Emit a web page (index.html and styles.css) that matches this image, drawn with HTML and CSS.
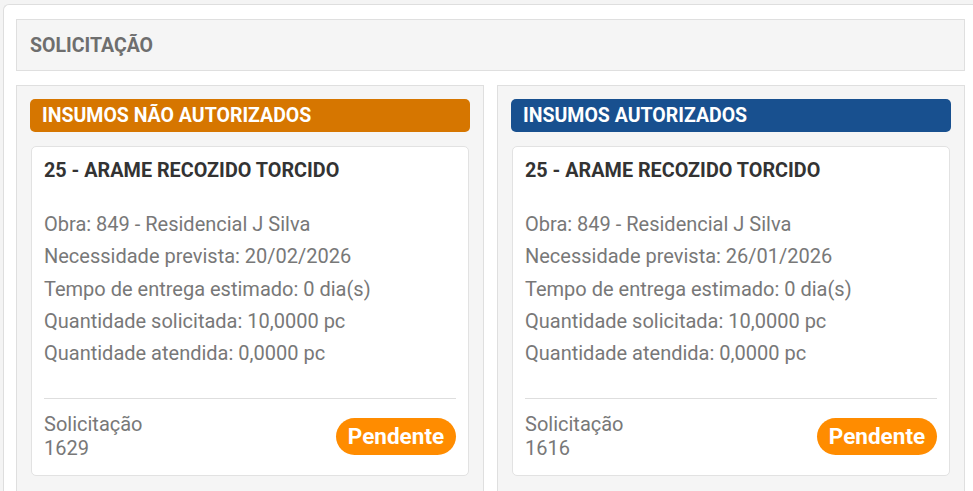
FILE: index.html
```html
<!DOCTYPE html>
<html lang="pt-BR">
<head>
<meta charset="utf-8">
<title>Solicitação</title>
<link rel="stylesheet" href="styles.css">
</head>
<body>
<div class="outer">
  <div class="page-header">SOLICITAÇÃO</div>
  <div class="columns">
    <section class="panel">
      <div class="bar bar-orange">INSUMOS NÃO AUTORIZADOS</div>
      <div class="card">
        <div class="card-title">25 - ARAME RECOZIDO TORCIDO</div>
        <div class="card-body">
          <div class="line">Obra: 849 - Residencial J Silva</div>
          <div class="line">Necessidade prevista: 20/02/2026</div>
          <div class="line">Tempo de entrega estimado: 0 dia(s)</div>
          <div class="line">Quantidade solicitada: 10,0000 pc</div>
          <div class="line">Quantidade atendida: 0,0000 pc</div>
        </div>
        <div class="card-footer">
          <div class="req">
            <div>Solicitação</div>
            <div>1629</div>
          </div>
          <span class="pill">Pendente</span>
        </div>
      </div>
    </section>
    <section class="panel">
      <div class="bar bar-blue">INSUMOS AUTORIZADOS</div>
      <div class="card">
        <div class="card-title">25 - ARAME RECOZIDO TORCIDO</div>
        <div class="card-body">
          <div class="line">Obra: 849 - Residencial J Silva</div>
          <div class="line">Necessidade prevista: 26/01/2026</div>
          <div class="line">Tempo de entrega estimado: 0 dia(s)</div>
          <div class="line">Quantidade solicitada: 10,0000 pc</div>
          <div class="line">Quantidade atendida: 0,0000 pc</div>
        </div>
        <div class="card-footer">
          <div class="req">
            <div>Solicitação</div>
            <div>1616</div>
          </div>
          <span class="pill">Pendente</span>
        </div>
      </div>
    </section>
  </div>
</div>
</body>
</html>
```

FILE: styles.css
```css
* { box-sizing: border-box; }

html, body {
  margin: 0;
  padding: 0;
  height: 100%;
  overflow: hidden;
}

body {
  background: #f4f4f4;
  font-family: Roboto, "Liberation Sans", Arial, sans-serif;
  padding: 4px 0 0 3px;
}

.outer {
  background: #ffffff;
  border: 1px solid #dedede;
  border-right: none;
  border-radius: 6px 0 0 0;
  padding: 14px 8px 0 12px;
  height: 600px;
}

.page-header {
  height: 52px;
  background: #f5f5f5;
  border: 1px solid #dfdfdf;
  padding-left: 13px;
  display: flex;
  align-items: center;
  font-size: 19.5px;
  font-weight: 700;
  color: #6e6e6e;
}

.columns {
  margin-top: 14px;
  display: grid;
  grid-template-columns: 1fr 1fr;
  gap: 13px;
}

.panel {
  background: #f5f5f5;
  border: 1px solid #dfdfdf;
  padding: 13px 13px 40px;
}

.bar {
  height: 33px;
  border-radius: 5px;
  padding-left: 12px;
  display: flex;
  align-items: center;
  color: #ffffff;
  font-size: 19.5px;
  font-weight: 700;
}

.bar-orange { background: #d67600; }
.bar-blue { background: #18508f; }

.card {
  margin: 14px 1px 0;
  background: #ffffff;
  border: 1px solid #e2e2e2;
  border-radius: 5px;
  padding: 12px 12px 15px;
}

.card-title {
  font-size: 19.8px;
  line-height: 24px;
  font-weight: 700;
  color: #333333;
}

.card-body {
  margin-top: 25px;
  font-size: 20px;
  line-height: 32.3px;
  color: #787878;
}

.card-footer {
  margin-top: 29px;
  border-top: 1px solid #dedede;
  padding-top: 13px;
  display: flex;
  align-items: center;
  justify-content: space-between;
}

.req {
  font-size: 20px;
  line-height: 24px;
  color: #787878;
}

.pill {
  display: inline-flex;
  align-items: center;
  justify-content: center;
  width: 120px;
  height: 37px;
  border-radius: 19px;
  background: #ff8c00;
  color: #ffffff;
  font-size: 22.5px;
  font-weight: 700;
}
```
